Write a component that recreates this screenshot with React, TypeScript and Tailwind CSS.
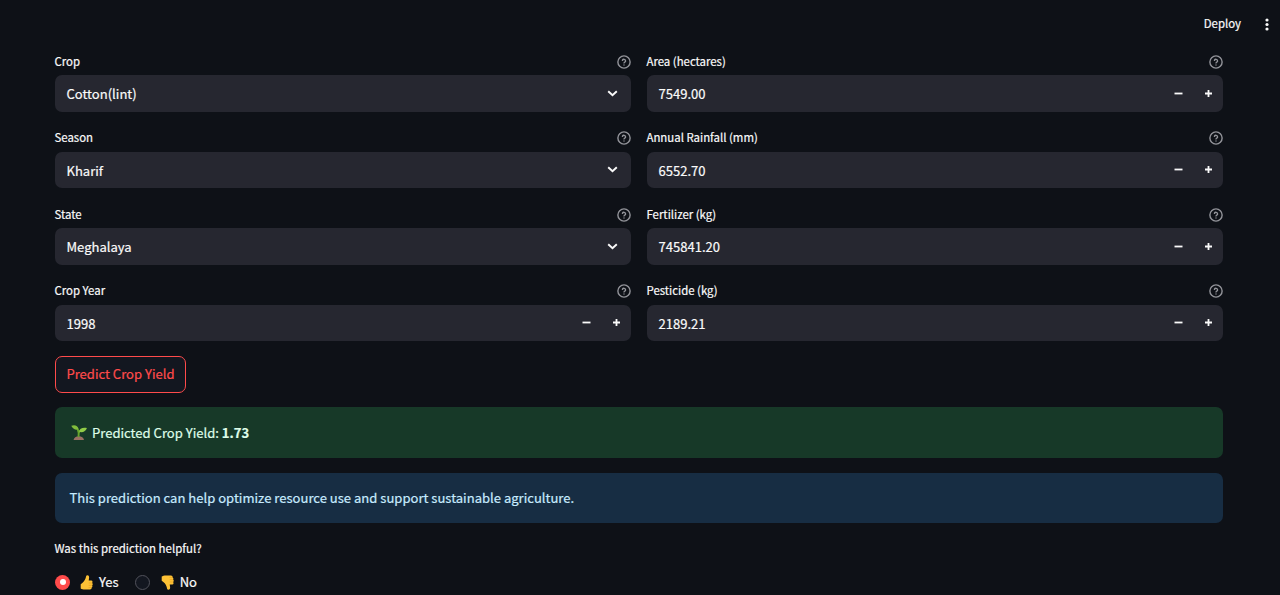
import React from "react";

function Help() {
  return (
    <svg className="size-[14px] text-[#93949a]" viewBox="0 0 24 24" fill="none" stroke="currentColor" strokeWidth="2.400" strokeLinecap="round" strokeLinejoin="round">
      <circle cx="12" cy="12" r="10.500" />
      <path d="M9.300 9.200a2.800 2.800 0 0 1 5.400 1c0 1.800-2.700 2.300-2.700 3.300" />
      <path d="M12 17.200h.01" />
    </svg>
  );
}

function Chevron() {
  return (
    <svg className="mr-[13px] h-[7px] w-[11px]" viewBox="0 0 11 7" fill="none" stroke="#fafafa" strokeWidth="1.900">
      <path d="M1.200 1.200 5.500 5.300 9.800 1.200" />
    </svg>
  );
}

function Stepper() {
  return (
    <div className="flex items-center">
      <span className="flex w-[30px] justify-center">
        <svg className="h-[9px] w-[9px]" viewBox="0 0 9 9" fill="#fafafa"><path d="M.5 3.600h8v1.800h-8z" /></svg>
      </span>
      <span className="flex w-[30px] justify-center">
        <svg className="h-[9px] w-[9px]" viewBox="0 0 9 9" fill="#fafafa"><path d="M1 3.600h2.600V1h1.800v2.600H8v1.800H5.400V8H3.600V5.400H1z" /></svg>
      </span>
    </div>
  );
}

type FieldProps = { label: string; value: string; select?: boolean };

function Field({ label, value, select }: FieldProps) {
  return (
    <div>
      <div className="flex h-[27px] items-center justify-between text-[11.400px]">
        <span className="-ml-[.5px]">{label}</span>
        <Help />
      </div>
      <div className="flex h-[36.500px] items-center justify-between rounded-[7px] bg-[#262730] pl-[11.500px] text-[13.050px]">
        <span className="pt-[1.500px]">{value}</span>
        {select ? <Chevron /> : <Stepper />}
      </div>
    </div>
  );
}

function Seedling() {
  return (
    <svg className="h-[16px] w-[16px]" viewBox="0 0 16 16">
      <path d="M2.600 15c.2-2.200 2.500-3.800 5.200-3.800s5 1.600 5.200 3.800z" fill="#9b7063" />
      <path d="M7.500 12C8 9 7.800 6.500 6.600 3.800M7.900 7.800c.2-1.800 1.400-2.600 3-3" fill="none" stroke="#67a52d" strokeWidth="1.900" />
      <path d="M.3.8C3.500-.4 7 .4 7.600 4.600 3.900 5.300 1.400 3.600.3.800z" fill="#82bd3c" />
      <path d="M8.200 6.800C8.300 3.500 11.500 2 15.900 2.900c-1 3.300-4.200 5-7.700 3.900z" fill="#91cc48" />
    </svg>
  );
}

function Thumb({ down }: { down?: boolean }) {
  return (
    <svg className={down ? "h-[15px] w-[13px] -scale-y-100" : "h-[15px] w-[13px]"} viewBox="0 0 13 15">
      <path d="M.7 9.200C3 8 4.900 5.500 5.700 3 6 1.500 6.200.3 7.300.3c1.700 0 2.100 1.700 1.700 3.300L8.700 5.400h2.600c1.300 0 1.600 1.600.8 2.600.9.700.8 1.900 0 2.500.6.800.3 1.700-.5 2.100.2 1.200-.5 2-1.700 2H5.500C3.500 14.700 1.600 14.200.7 13.500z" fill="#fdc236" />
      <path d="M8.700 8h3.200M8.700 10.400h3.200M8.500 12.600h2.900" stroke="#e59a1c" strokeWidth=".6" fill="none" />
    </svg>
  );
}

export default function App() {
  return (
    <div className="h-[595px] overflow-hidden bg-[#0e1117] font-['Noto_Sans_CJK_JP',sans-serif] text-[#fafafa] [-webkit-text-stroke:0.2px]">
      <header className="flex h-12 items-center justify-end gap-[24px] pr-[11px] text-[11.400px]">
        <span className="-mt-px">Deploy</span>
        <svg className="h-[13px] w-[4px]" viewBox="0 0 4 13" fill="#fafafa">
          <circle cx="2" cy="2" r="1.600" /><circle cx="2" cy="6.500" r="1.600" /><circle cx="2" cy="11" r="1.600" />
        </svg>
      </header>
      <main className="ml-[55px] w-[1168px]">
        <div className="grid grid-cols-2 gap-x-4 gap-y-[13px]">
          <Field label="Crop" value="Cotton(lint)" select />
          <Field label="Area (hectares)" value="7549.00" />
          <Field label="Season" value="Kharif" select />
          <Field label="Annual Rainfall (mm)" value="6552.70" />
          <Field label="State" value="Meghalaya" select />
          <Field label="Fertilizer (kg)" value="745841.20" />
          <Field label="Crop Year" value="1998" />
          <Field label="Pesticide (kg)" value="2189.21" />
        </div>
        <button className="mt-[15px] flex h-[36.500px] w-[131px] items-center justify-center rounded-[7px] border border-[#ff4b4b] bg-[#131720] text-[13.050px] text-[#ff4b4b]">
          Predict Crop Yield
        </button>
        <div className="mt-[14.500px] flex h-[51px] items-center rounded-[7px] bg-[#173928] pl-4 text-[13.050px] text-[#dffde9]">
          <Seedling />
          <span className="ml-[5px]">Predicted Crop Yield: <b>1.73</b></span>
        </div>
        <div className="mt-[15px] flex h-[50px] items-center rounded-[7px] bg-[#172d43] pl-[14.500px] text-[13.050px] text-[#c7ebff]">
          This prediction can help optimize resource use and support sustainable agriculture.
        </div>
        <div className="mt-[13px] flex h-[26px] items-center text-[11.450px]"><span className="-ml-[.5px]">Was this prediction helpful?</span></div>
        <div className="mt-[7px] flex h-[26px] items-center text-[13.050px]">
          <span className="flex size-[15px] items-center justify-center rounded-full bg-[#ff4b4b]"><span className="size-[6px] rounded-full bg-white" /></span>
          <span className="ml-[10px] flex items-center gap-[6px]"><Thumb /> Yes</span>
          <span className="ml-4 size-[15px] rounded-full border border-[#51525b] bg-[#131720]" />
          <span className="ml-[11px] flex items-center gap-[6px]"><Thumb down /> No</span>
        </div>
      </main>
    </div>
  );
}
